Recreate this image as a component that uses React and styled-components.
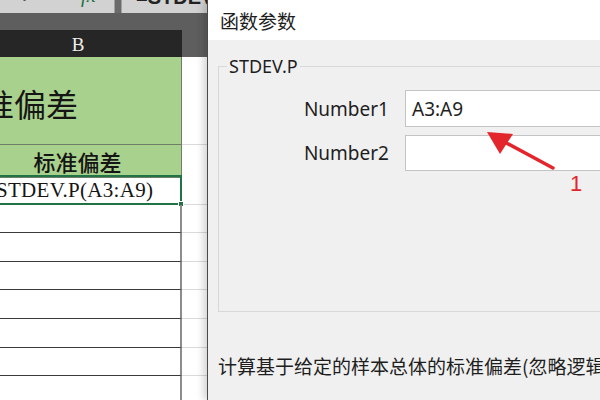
import React from 'react'
import styled, { createGlobalStyle } from "styled-components";

const Global = createGlobalStyle`
  * { box-sizing: border-box; }
  body { margin: 0; font-family: "Noto Sans", "Noto Sans CJK SC", sans-serif; }
`;

const rows = [
  { h: 88, kind: "title", text: "标准偏差" },
  { h: 30, kind: "head", text: "标准偏差" },
  { h: 30, kind: "selected", text: "STDEV.P(A3:A9)" },
  { h: 28 }, { h: 29 }, { h: 28 }, { h: 29 }, { h: 29 }, { h: 28 }, { h: 30 },
];

export default function App() {
  return (
    <Screen>
      <Global />
      <SheetPane>
        <FormulaStrip>
          <ButtonBox>
            <Caret>✔</Caret>
            <Fx>fx</Fx>
          </ButtonBox>
          <FormulaBox>
            <FormulaText>=STDEV.P(A3:A9)</FormulaText>
          </FormulaBox>
        </FormulaStrip>
        <Band />
        <Columns>
          <HeaderRow>
            <ColHead>B</ColHead>
            <ColHead $blank />
          </HeaderRow>
          {rows.map((r, i) => (
            <Row key={i} style={{ height: r.h }}>
              <Cell $kind={r.kind || "plain"}>
                {r.text}
                {r.kind === "selected" && <Handle />}
              </Cell>
              <SideCell />
            </Row>
          ))}
        </Columns>
      </SheetPane>

      <Dialog>
        <TitleBar>函数参数</TitleBar>
        <Body>
          <Group>
            <Legend>STDEV.P</Legend>
            <Fields>
              <FieldLabel>Number1</FieldLabel>
              <FieldBox $h={37}>A3:A9</FieldBox>
              <FieldLabel>Number2</FieldLabel>
              <FieldBox $h={36} />
            </Fields>
          </Group>
          <Description>计算基于给定的样本总体的标准偏差(忽略逻辑值和文本)</Description>
        </Body>
      </Dialog>

      <Annotation width="600" height="400" viewBox="0 0 600 400">
        <line x1="553" y1="168" x2="499" y2="139" stroke="#e3262b" strokeWidth="3.5" strokeLinecap="round" />
        <polygon points="487,132 500,154 513,134" fill="#e3262b" />
      </Annotation>
      <Marker>1</Marker>
    </Screen>
  );
}

const Screen = styled.div`
  position: relative;
  width: 600px;
  height: 400px;
  display: flex;
  overflow: hidden;
  background: #f0f0f0;
`;

const SheetPane = styled.div`
  width: 207px;
  flex-shrink: 0;
  display: flex;
  flex-direction: column;
  overflow: hidden;
  background: #5e5e5e;

  & > * {
    flex-shrink: 0;
  }
`;

const FormulaStrip = styled.div`
  height: 13px;
  display: flex;
  gap: 6px;
  background: #6a6a6a;
`;

const ButtonBox = styled.div`
  width: 115px;
  background: #d2d2d2;
  border-right: 1px solid #a0a0a0;
  display: flex;
  align-items: flex-end;
  overflow: hidden;
  padding-left: 20px;
  gap: 46px;
`;

const Caret = styled.span`
  font-size: 18px;
  line-height: 18px;
  margin-bottom: 8px;
  color: #333;
  font-family: "DejaVu Sans", sans-serif;
`;

const Fx = styled.span`
  font-family: "Liberation Serif", serif;
  font-style: italic;
  font-size: 20px;
  line-height: 20px;
  margin-bottom: 8px;
  color: #217346;
`;

const FormulaBox = styled.div`
  flex: 1;
  background: #d2d2d2;
  border-left: 1px solid #a0a0a0;
  display: flex;
  align-items: flex-end;
  overflow: hidden;
  padding-left: 14px;
`;

const FormulaText = styled.span`
  font-family: "Liberation Sans", sans-serif;
  font-weight: bold;
  font-size: 20px;
  line-height: 20px;
  margin-bottom: 6px;
  color: #222;
  white-space: nowrap;
`;

const Band = styled.div`
  height: 17px;
  background: #5e5e5e;
`;

const Columns = styled.div`
  margin-left: -26px;
  display: flex;
  flex-direction: column;

  & > * {
    flex-shrink: 0;
  }
`;

const HeaderRow = styled.div`
  height: 27px;
  display: grid;
  grid-template-columns: 208px 25px;
`;

const ColHead = styled.div`
  background: ${(p) => (p.$blank ? "#5e5e5e" : "#262626")};
  color: #ececec;
  font-family: "Liberation Serif", serif;
  font-size: 19px;
  display: flex;
  align-items: center;
  justify-content: center;
  padding-top: 2px;
`;

const Row = styled.div`
  display: grid;
  grid-template-columns: 208px 25px;
  background: #ffffff;
`;

const cellStyles = {
  title: `
    background: #a9d18e;
    border-right: 1px solid #6f7f66;
    border-bottom: 1px solid #6f7f66;
    justify-content: flex-end;
    padding-right: 103px;
    padding-top: 4px;
    font-size: 32px;
    font-family: "Noto Sans CJK SC", sans-serif;
  `,
  head: `
    background: #a9d18e;
    border-right: 1px solid #6f7f66;
    border-bottom: 1px solid #6f7f66;
    justify-content: center;
    font-size: 22px;
    font-weight: 500;
    font-family: "Noto Sans CJK SC", sans-serif;
  `,
  selected: `
    border: 2px solid #217346;
    font-family: "Liberation Serif", serif;
    font-size: 21px;
    letter-spacing: 0.3px;
    padding-left: 20px;
  `,
  plain: `
    border-right: 2px solid #8c8c8c;
    border-bottom: 1px solid #3a3a3a;
  `,
};

const Cell = styled.div`
  position: relative;
  display: flex;
  align-items: center;
  white-space: nowrap;
  color: #151515;
  ${(p) => cellStyles[p.$kind]}
`;

const Handle = styled.span`
  position: absolute;
  right: -4px;
  bottom: -4px;
  width: 6px;
  height: 6px;
  background: #217346;
  border: 1px solid #fff;
`;

const SideCell = styled.div`
  border-bottom: 1px solid #dadada;
`;

const Dialog = styled.div`
  position: relative;
  z-index: 1;
  flex: 1;
  min-width: 0;
  overflow: hidden;
  background: #f0f0f0;
  border-left: 1px solid #4a4a4a;
  box-shadow: -4px 0 7px rgba(0, 0, 0, 0.16);
`;

const TitleBar = styled.div`
  height: 40px;
  background: #ffffff;
  display: flex;
  align-items: center;
  padding-left: 12px;
  font-family: "Noto Sans CJK SC", sans-serif;
  font-size: 19px;
  color: #1e1e1e;
`;

const Body = styled.div`
  width: 560px;
  padding: 14px 0 0 10px;
`;

const Group = styled.fieldset`
  margin: 0;
  width: 520px;
  height: 258px;
  padding: 12px 0 0 0;
  border: 1px solid #d8d8d8;
`;

const Legend = styled.legend`
  margin-left: 8px;
  padding: 0 2px;
  font-size: 18px;
  line-height: 24px;
  color: #1e1e1e;
`;

const Fields = styled.div`
  display: grid;
  grid-template-columns: 170px 1fr;
  column-gap: 16px;
  row-gap: 8px;
`;

const FieldLabel = styled.div`
  align-self: center;
  text-align: right;
  font-size: 19px;
  color: #1e1e1e;
`;

const FieldBox = styled.div`
  height: ${(p) => p.$h}px;
  background: #ffffff;
  border: 1px solid #c4c4c4;
  display: flex;
  align-items: center;
  padding-left: 6px;
  font-size: 19px;
  color: #1e1e1e;
`;

const Description = styled.div`
  margin-top: 41px;
  font-family: "Noto Sans CJK SC", sans-serif;
  font-size: 19px;
  line-height: 26px;
  white-space: nowrap;
  color: #1e1e1e;
`;

const Annotation = styled.svg`
  position: absolute;
  left: 0;
  top: 0;
  z-index: 2;
  pointer-events: none;
`;

const Marker = styled.span`
  position: absolute;
  z-index: 2;
  left: 570px;
  top: 171px;
  font-family: "Liberation Sans", sans-serif;
  font-size: 22px;
  color: #e3262b;
`;
